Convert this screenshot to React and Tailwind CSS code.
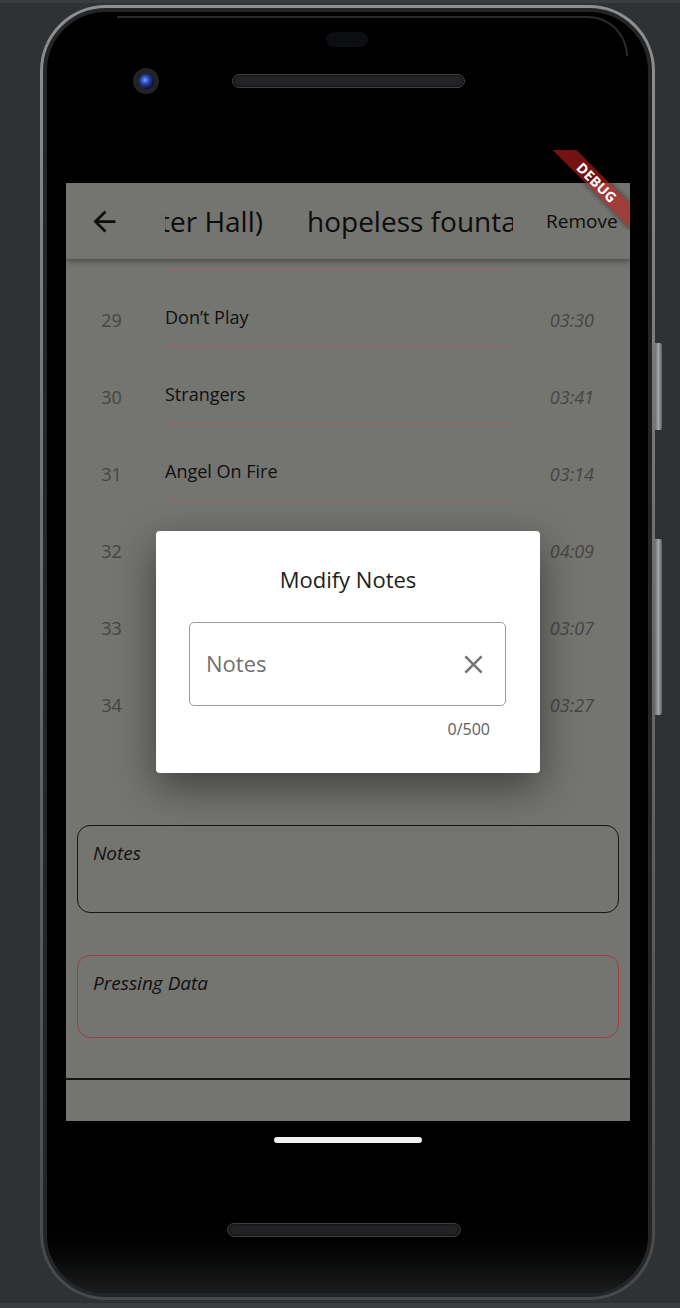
import React from 'react';
import { MdArrowBack, MdClose } from 'react-icons/md';

const tracks = [
    { no: 28, title: 'Bad At Love', time: '03:01' },
    { no: 29, title: 'Don’t Play', time: '03:30' },
    { no: 30, title: 'Strangers', time: '03:41' },
    { no: 31, title: 'Angel On Fire', time: '03:14' },
    { no: 32, title: 'Devil In Me', time: '04:09' },
    { no: 33, title: 'Hopeless', time: '03:07' },
    { no: 34, title: 'Heaven In Hiding', time: '03:27' },
];

const albumTitle = 'hopeless fountain kingdom (Live from Webster Hall)';

const TrackRow = ({ track }) => (
    <div className="flex h-[77px] shrink-0">
        <div className="w-[91px] pt-[38px] text-center text-[18px] leading-[24px] text-[#454545]">{track.no}</div>
        <div className="ml-[8px] w-[347px] border-b border-[#a06262] pt-[35px] text-[18px] leading-[24px] text-[#101010] whitespace-nowrap overflow-hidden">
            {track.title}
        </div>
        <div className="flex-1 pt-[38px] pr-[36px] text-right text-[18px] italic leading-[24px] text-[#454545]">{track.time}</div>
    </div>
);

const ModifyNotesDialog = () => (
    <div className="absolute inset-0 z-20 flex items-center justify-center">
        <div className="w-[384px] h-[242px] bg-white rounded-[4px] shadow-[0_14px_40px_rgba(0,0,0,0.45)] flex flex-col">
            <div className="pt-[33px] text-center text-[22px] leading-[30px] text-[#1d1d1d]">Modify Notes</div>
            <div className="mt-[28px] ml-[33px] w-[317px] h-[84px] rounded-[5px] border border-[#9c9c9c] flex items-center pl-[16px] pr-[16px]">
                <span className="flex-1 text-[22px] leading-[30px] -mt-[3px] text-[#707070]">Notes</span>
                <MdClose size={31} className="text-[#757575]" />
            </div>
            <div className="mt-[12px] ml-[33px] w-[301px] text-right text-[16px] leading-[22px] text-[#5e5e5e]">0/500</div>
        </div>
    </div>
);

const DebugBanner = () => (
    <div className="absolute top-0 right-0 w-[80px] h-[80px] overflow-hidden pointer-events-none z-50">
        <div className="absolute left-[-13px] top-[24px] w-[120px] h-[17px] rotate-45 bg-[#b71c1c]/[0.63] shadow-[0_0_6px_rgba(0,0,0,0.5)] flex items-center justify-center">
            <span className="text-[14px] leading-none font-bold text-white tracking-[0.3px]">DEBUG</span>
        </div>
    </div>
);

const AppScreen = () => (
    <div className="relative flex-1 bg-[#747470] flex flex-col overflow-hidden" style={{ fontFamily: '"Open Sans", "Noto Sans", sans-serif' }}>
        {/* app bar */}
        <div className="relative z-10 h-[76px] shrink-0 flex items-center bg-[#747470] shadow-[0_2px_6px_rgba(0,0,0,0.4)]">
            <div className="w-[77px] flex justify-center">
                <MdArrowBack size={33} className="text-[#0c0c0c]" />
            </div>
            <div className="ml-[22px] w-[348px] overflow-hidden flex text-[28px] leading-[38px] text-[#0c0c0c] whitespace-nowrap">
                <div className="w-[98px] shrink-0 overflow-hidden flex justify-end">
                    <span className="shrink-0">{albumTitle}</span>
                </div>
                <span className="ml-[44px] shrink-0">{albumTitle}</span>
            </div>
            <div className="ml-[22px] px-[11px] text-[19px] text-[#0c0c0c]">Remove</div>
        </div>

        {/* track list */}
        <div className="h-[472px] shrink-0 overflow-hidden">
            <div className="-mt-[66px] flex flex-col">
                {tracks.map((t) => <TrackRow key={t.no} track={t} />)}
            </div>
        </div>

        <div className="mx-[11px] mt-[94px] h-[88px] shrink-0 rounded-[13px] border-[1.5px] border-[#161616] pl-[15px] pt-[14px] text-[19px] italic leading-[26px] text-[#111]">
            Notes
        </div>
        <div className="mx-[11px] mt-[42px] h-[83px] shrink-0 rounded-[13px] border border-[#a03c3c] pl-[15px] pt-[14px] text-[19px] italic leading-[26px] text-[#111]">
            Pressing Data
        </div>
        <div className="mt-[40px] h-[1.5px] shrink-0 bg-[#141414]" />

        <ModifyNotesDialog />
    </div>
);

export default function App() {
    return (
        <div className="w-[680px] h-[1308px] bg-[#2f3133] border-t-[3px] border-b-[5px] border-[#3a3c3f] pt-[2px] pl-[40px] overflow-hidden">
            <div className="relative w-[615px] h-[1295px] rounded-[66px] p-[3px] bg-gradient-to-b from-[#8d8f91] via-[#67696b] to-[#46484b]">
                {/* side buttons */}
                <div className="absolute -right-[7px] top-[338px] w-[7px] h-[87px] rounded-r-[2px] bg-gradient-to-r from-[#6d6f71] via-[#a4a6a8] to-[#5d5f61]" />
                <div className="absolute -right-[7px] top-[534px] w-[7px] h-[176px] rounded-r-[2px] bg-gradient-to-r from-[#6d6f71] via-[#a4a6a8] to-[#5d5f61]" />

                <div className="relative h-full rounded-[63px] bg-black border-[4px] border-[#242527] px-[18px] pl-[19px] flex flex-col">
                    {/* glass highlight */}
                    <div className="absolute left-[70px] right-[20px] top-[4px] h-[40px] rounded-tr-[44px] border-t-[2px] border-r-[2px] border-[#46484b]/60" />

                    {/* top bezel */}
                    <div className="h-[138px] shrink-0 flex flex-col">
                        <div className="mt-[20px] ml-[260px] w-[42px] h-[15px] rounded-full bg-[#0d0e12]" />
                        <div className="mt-[21px] h-[26px] flex items-center">
                            <div className="ml-[67px] w-[26px] h-[26px] rounded-full bg-[#222327] flex items-center justify-center">
                                <div className="w-[15px] h-[15px] rounded-full bg-[radial-gradient(circle_at_40%_40%,#7d9bff_0%,#2c48b8_30%,#0b1030_70%)]" />
                            </div>
                            <div className="ml-[73px] w-[233px] h-[14px] rounded-full bg-[#232325] border border-[#3d3e40] shadow-[inset_0_0_3px_rgba(0,0,0,0.9)]" />
                        </div>
                    </div>

                    {/* screen */}
                    <div className="relative w-[564px] h-[971px] shrink-0 bg-black flex flex-col">
                        <div className="h-[33px] shrink-0 bg-black" />
                        <AppScreen />
                        <DebugBanner />
                    </div>

                    {/* bottom bezel */}
                    <div className="flex-1 flex flex-col items-center rounded-b-[58px] bg-gradient-to-b from-black via-black to-[#1c1d1e] -mx-[18px] -ml-[19px]">
                        <div className="mt-[16px] w-[148px] h-[6px] rounded-full bg-[#f2f2f2]" />
                        <div className="mt-[80px] -ml-[7px] w-[234px] h-[14px] rounded-full bg-[#232325] border border-[#3d3e40] shadow-[inset_0_0_3px_rgba(0,0,0,0.9)]" />
                    </div>
                </div>
            </div>
        </div>
    );
}
